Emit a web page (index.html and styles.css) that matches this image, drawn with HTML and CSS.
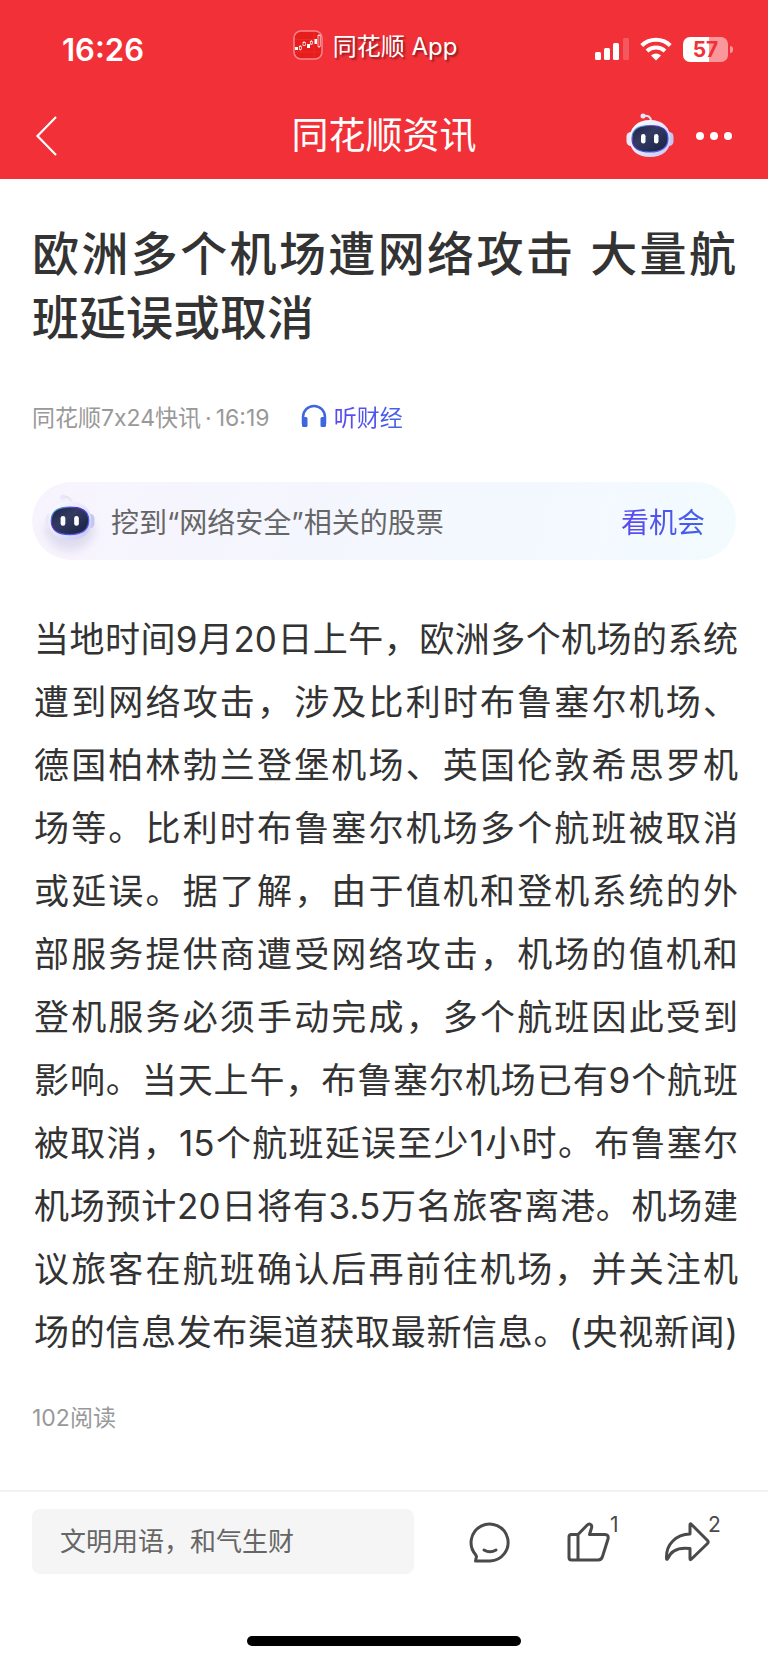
FILE: index.html
```html
<!doctype html>
<html lang="zh-CN">
<head>
  <meta charset="utf-8">
  <meta name="viewport" content="width=device-width, initial-scale=1">
  <title>同花顺资讯</title>
  <link rel="stylesheet" href="styles.css">
</head>

<body>
  <!-- robot face, used in the nav bar and in the stock banner -->
  <svg class="defs" width="0" height="0" aria-hidden="true">
    <defs>
      <linearGradient id="shell" x1="0" y1="0" x2="1" y2="1">
        <stop offset="0" stop-color="#ffffff"/>
        <stop offset="0.5" stop-color="#e6e6fa"/>
        <stop offset="1" stop-color="#c4c6f0"/>
      </linearGradient>
      <linearGradient id="rim" x1="0" y1="0" x2="1" y2="1">
        <stop offset="0" stop-color="#55d5ee"/>
        <stop offset="0.35" stop-color="#5a2bc8"/>
        <stop offset="0.7" stop-color="#3c5be8"/>
        <stop offset="1" stop-color="#8a5cf0"/>
      </linearGradient>
      <linearGradient id="glass" x1="0" y1="0" x2="1" y2="1">
        <stop offset="0" stop-color="#1c2246"/>
        <stop offset="0.4" stop-color="#343b60"/>
        <stop offset="1" stop-color="#161e42"/>
      </linearGradient>
      <symbol id="robot" viewBox="0 0 48 46">
        <path d="M17 3c5-1 8 1 8 5" fill="none" stroke="#e4e4f6" stroke-width="2"/>
        <circle cx="17" cy="3" r="2.5" fill="#e8e8fa"/>
        <rect x="0.5" y="19" width="9" height="14" rx="4.5" fill="#e9e9fb"/>
        <rect x="38.5" y="19" width="9" height="14" rx="4.5" fill="#c3c6f0"/>
        <path d="M24 7C37 7 44.5 15 44.5 26S37 44 24 44 3.5 37 3.5 26 11 7 24 7z" fill="url(#shell)"/>
        <path d="M24 12.5c11 0 18 3 18 13S35 39 24 39 6 35.500 6 25.5s7-13 18-13z" fill="url(#glass)" stroke="url(#rim)" stroke-width="1.2"/>
        <rect x="15" y="21" width="4.5" height="9.5" rx="2.2" fill="#fff"/>
        <rect x="28" y="21" width="4.5" height="9.5" rx="2.2" fill="#fff"/>
      </symbol>
    </defs>
  </svg>

  <header class="top">
    <div class="status">
      <span class="time">16:26</span>
      <span class="app">
        <svg width="30" height="30" viewBox="0 0 30 30" aria-hidden="true">
          <rect x="1" y="1" width="28" height="28" rx="7" fill="#e51d1d" stroke="#f7878a" stroke-width="1.5"/>
          <path d="M2 9.5h26M2 22h26M21 2v26" stroke="#ee3b3b" stroke-width="0.5"/>
          <g fill="#fff">
            <rect x="2" y="17" width="3" height="3"/>
            <rect x="14" y="14" width="3" height="4"/>
            <rect x="21.5" y="9" width="2.5" height="5"/>
          </g>
          <g fill="none" stroke="#fff" stroke-width="0.7">
            <path d="M7.3 15v5.5M11 11v5M18.3 10v5M26 4v14"/>
            <rect x="6.3" y="16.5" width="2" height="3" fill="#e51d1d"/>
            <rect x="10" y="12.5" width="2.3" height="3" fill="#e51d1d"/>
            <rect x="17.3" y="11.5" width="2" height="2.5" fill="#e51d1d"/>
            <rect x="25" y="5.5" width="2.2" height="11" fill="#e51d1d"/>
          </g>
        </svg>
        同花顺 App
      </span>
      <span class="signs">
        <svg width="34" height="24" viewBox="0 0 34 24" aria-hidden="true">
          <g fill="#fff">
            <rect x="0" y="15" width="6" height="8" rx="1.5"/>
            <rect x="9" y="11" width="6" height="12" rx="1.5"/>
            <rect x="18" y="6" width="6" height="17" rx="1.5"/>
            <rect x="28" y="1" width="6" height="22" rx="1.5" opacity="0.2"/>
          </g>
        </svg>
        <svg width="32" height="24" viewBox="0 0 32 24" aria-hidden="true">
          <g fill="none" stroke="#fff" stroke-width="4">
            <path d="M1.7 8.5a20.5 20.5 0 0 1 28.6 0"/>
            <path d="M7 14a13 13 0 0 1 18 0"/>
          </g>
          <path d="M16 23.5l-5-5a7.2 7.2 0 0 1 10 0z" fill="#fff"/>
        </svg>
        <span class="battery">57</span>
      </span>
    </div>
    <nav class="nav">
      <button class="back" aria-label="返回">
        <svg width="22" height="40" viewBox="0 0 22 40" aria-hidden="true">
          <path d="M20 1L1.5 20 20 39" fill="none" stroke="#fff" stroke-width="2.2"/>
        </svg>
      </button>
      <h2>同花顺资讯</h2>
      <div class="tools">
        <button aria-label="问财"><svg width="48" height="46" aria-hidden="true"><use href="#robot"/></svg></button>
        <button aria-label="更多">
          <svg width="36" height="8" viewBox="0 0 36 8" fill="#fff" aria-hidden="true">
            <circle cx="4" cy="4" r="4"/><circle cx="18" cy="4" r="4"/><circle cx="32" cy="4" r="4"/>
          </svg>
        </button>
      </div>
    </nav>
  </header>

  <main>
    <h1>欧洲多个机场遭网络攻击 大量航班延误或取消</h1>

    <div class="meta">
      <span>同花顺7x24快讯<i class="dot">·</i>16:19</span>
      <a href="#" class="listen">
        <svg width="26" height="24" viewBox="0 0 26 24" aria-hidden="true">
          <path d="M2 20v-7a11 11 0 0 1 22 0v7" fill="none" stroke="#3f66e0" stroke-width="2.5"/>
          <rect x="1" y="13" width="5.5" height="10" rx="1.5" fill="#3f66e0"/>
          <rect x="19.5" y="13" width="5.5" height="10" rx="1.5" fill="#3f66e0"/>
        </svg>
        <b class="blue">听财经</b>
      </a>
    </div>

    <a href="#" class="banner">
      <svg class="bot" width="50" height="48" aria-hidden="true"><use href="#robot"/></svg>
      <span>挖到“网络安全”相关的股票</span>
      <b class="blue go">看机会</b>
    </a>

    <p class="article">
      当地时间9月20日上午，欧洲多个机场的系统<br>
      遭到网络攻击，涉及比利时布鲁塞尔机场、<br>
      德国柏林勃兰登堡机场、英国伦敦希思罗机<br>
      场等。比利时布鲁塞尔机场多个航班被取消<br>
      或延误。据了解，由于值机和登机系统的外<br>
      部服务提供商遭受网络攻击，机场的值机和<br>
      登机服务必须手动完成，多个航班因此受到<br>
      影响。当天上午，布鲁塞尔机场已有9个航班<br>
      被取消，15个航班延误至少1小时。布鲁塞尔<br>
      机场预计20日将有3.5万名旅客离港。机场建<br>
      议旅客在航班确认后再前往机场，并关注机<br>
      场的信息发布渠道获取最新信息。(央视新闻)
    </p>

    <p class="reads">102阅读</p>
  </main>

  <footer>
    <div class="bar">
      <input type="text" aria-label="评论" placeholder="文明用语，和气生财">
      <button aria-label="评论列表">
        <svg width="44" height="44" viewBox="0 0 44 44" aria-hidden="true">
          <path d="M7.5 34.5A18.5 18.5 0 1 1 22 41H7.5l1-4.5z"/>
          <path d="M16 30q6 3.500 12 0"/>
        </svg>
      </button>
      <button aria-label="点赞">
        <svg width="44" height="44" viewBox="0 0 44 44" aria-hidden="true">
          <path d="M12 14.5H5.500q-2.500 0-2.500 2.500v20.500q0 2.500 2.500 2.500H32q3.500 0 4.500-3.500L42 19q1-4.500-3-4.500H23.500l2-6.500q.8-3-1.500-3.800-1.500-.5-3 1L12 14.500zV40"/>
        </svg>
        <sup>1</sup>
      </button>
      <button aria-label="分享">
        <svg width="44" height="44" viewBox="0 0 44 44" aria-hidden="true">
          <path d="M26 14V5q0-2 1.500-.5l16 16q1.500 1.500 0 3l-16 15.500q-1.500 1.500-1.500-.5V28.500C14 27 7 30 3.500 39q-1 1-1-1C2 24 12 14.500 26 14z"/>
        </svg>
        <sup>2</sup>
      </button>
    </div>
    <div class="home"></div>
  </footer>
</body>

</html>
```

FILE: styles.css
```css
*{
  box-sizing: border-box;
}
body{
  margin: 0;
  min-height: 100vh;
  display: flex;
  flex-direction: column;
  background: #fff;
  color: #333;
  font-family: Inter, "Noto Sans CJK SC", sans-serif;
}
button{
  padding: 0;
  border: none;
  background: none;
  font-family: inherit;
  cursor: pointer;
}
a{
  text-decoration: none;
}
svg{
  display: block;
  overflow: visible;
}
.defs{
  position: absolute;
}
.blue{
  background: linear-gradient(90deg, #5c48f0, #4262e8);
  -webkit-background-clip: text;
  background-clip: text;
  color: transparent;
  font-weight: 400;
}

/* red top */
.top{
  background: #f23037;
  color: #fff;
  padding-bottom: 6px;
}
.status{
  height: 98px;
  display: grid;
  grid-template-columns: 1fr auto 1fr;
  align-items: center;
  padding: 0 36px;
}
.time{
  padding-left: 26px;
  font-size: 31px;
  font-weight: 600;
}
.app{
  display: flex;
  align-items: center;
  gap: 10px;
  padding-bottom: 9px;
  margin-right: 18px;
  font-size: 24px;
  text-shadow: 2px 2px 2px rgba(0,0,0,0.4);
}
.signs{
  display: flex;
  justify-content: flex-end;
  align-items: center;
  gap: 11px;
}
.battery{
  position: relative;
  width: 45px;
  height: 25px;
  margin-right: 4px;
  border-radius: 7px;
  background: linear-gradient(90deg, #fff 57%, #f9989b 57%);
  color: #f23037;
  font-size: 21px;
  font-weight: 700;
  line-height: 25px;
  text-align: center;
}
.battery::after{
  content: "";
  position: absolute;
  right: -5px;
  top: 9px;
  width: 3px;
  height: 7px;
  border-radius: 0 3px 3px 0;
  background: #f9989b;
}
.nav{
  height: 75px;
  display: grid;
  grid-template-columns: 1fr auto 1fr;
  align-items: center;
  padding: 0 36px;
}
.nav h2{
  margin: 0;
  font-size: 37px;
  font-weight: 400;
  line-height: 48px;
}
.tools{
  display: flex;
  justify-content: flex-end;
  align-items: center;
  gap: 22px;
}

/* article */
main{
  flex: 1;
  padding: 43px 32px 0;
}
h1{
  margin: 0 0 48px;
  font-size: 47px;
  font-weight: 500;
  line-height: 64px;
  text-align: justify;
}
.meta{
  display: flex;
  align-items: center;
  gap: 31px;
  height: 36px;
  margin-bottom: 48px;
  color: #999;
  font-size: 23px;
}
.dot{
  margin: 0 4px;
  font-style: normal;
}
.listen{
  display: flex;
  align-items: center;
  gap: 7px;
}
.banner{
  display: flex;
  align-items: center;
  gap: 16px;
  height: 78px;
  margin-bottom: 48px;
  padding: 0 31px 0 13px;
  border-radius: 39px;
  background: linear-gradient(100deg, #f8f4fd, #f4f6fe 40%, #f3fbff);
  color: #666;
  font-size: 28px;
}
.bot{
  margin-bottom: 7px;
  filter: drop-shadow(0 10px 5px rgba(120,120,180,0.2));
}
.go{
  margin-left: auto;
}
.article{
  margin: 0 -2px 38px 2px;
  font-size: 35px;
  line-height: 63px;
  text-align: justify;
  text-align-last: justify;
  text-spacing-trim: space-all;
}
.reads{
  margin: 0;
  color: #999;
  font-size: 23px;
  line-height: 32px;
}

/* bottom bar */
footer{
  border-top: 2px solid #f2f2f2;
  padding: 17px 32px;
}
.bar{
  display: flex;
  align-items: center;
  gap: 54px;
  padding-right: 28px;
}
.bar input{
  flex: 1;
  min-width: 0;
  height: 65px;
  padding: 0 28px;
  border: none;
  border-radius: 8px;
  background: #f5f5f5;
  font-family: inherit;
  font-size: 26px;
}
.bar input::placeholder{
  color: #666;
  opacity: 1;
}
.bar button{
  position: relative;
  color: #4a4a4a;
}
.bar svg{
  fill: none;
  stroke: #4a4a4a;
  stroke-width: 3;
  stroke-linejoin: round;
  stroke-linecap: round;
}
.bar sup{
  position: absolute;
  left: 100%;
  top: -7px;
  font-size: 21px;
  line-height: 24px;
}
.home{
  width: 274px;
  height: 10px;
  margin: 62px auto 0;
  border-radius: 5px;
  background: #000;
}
```
